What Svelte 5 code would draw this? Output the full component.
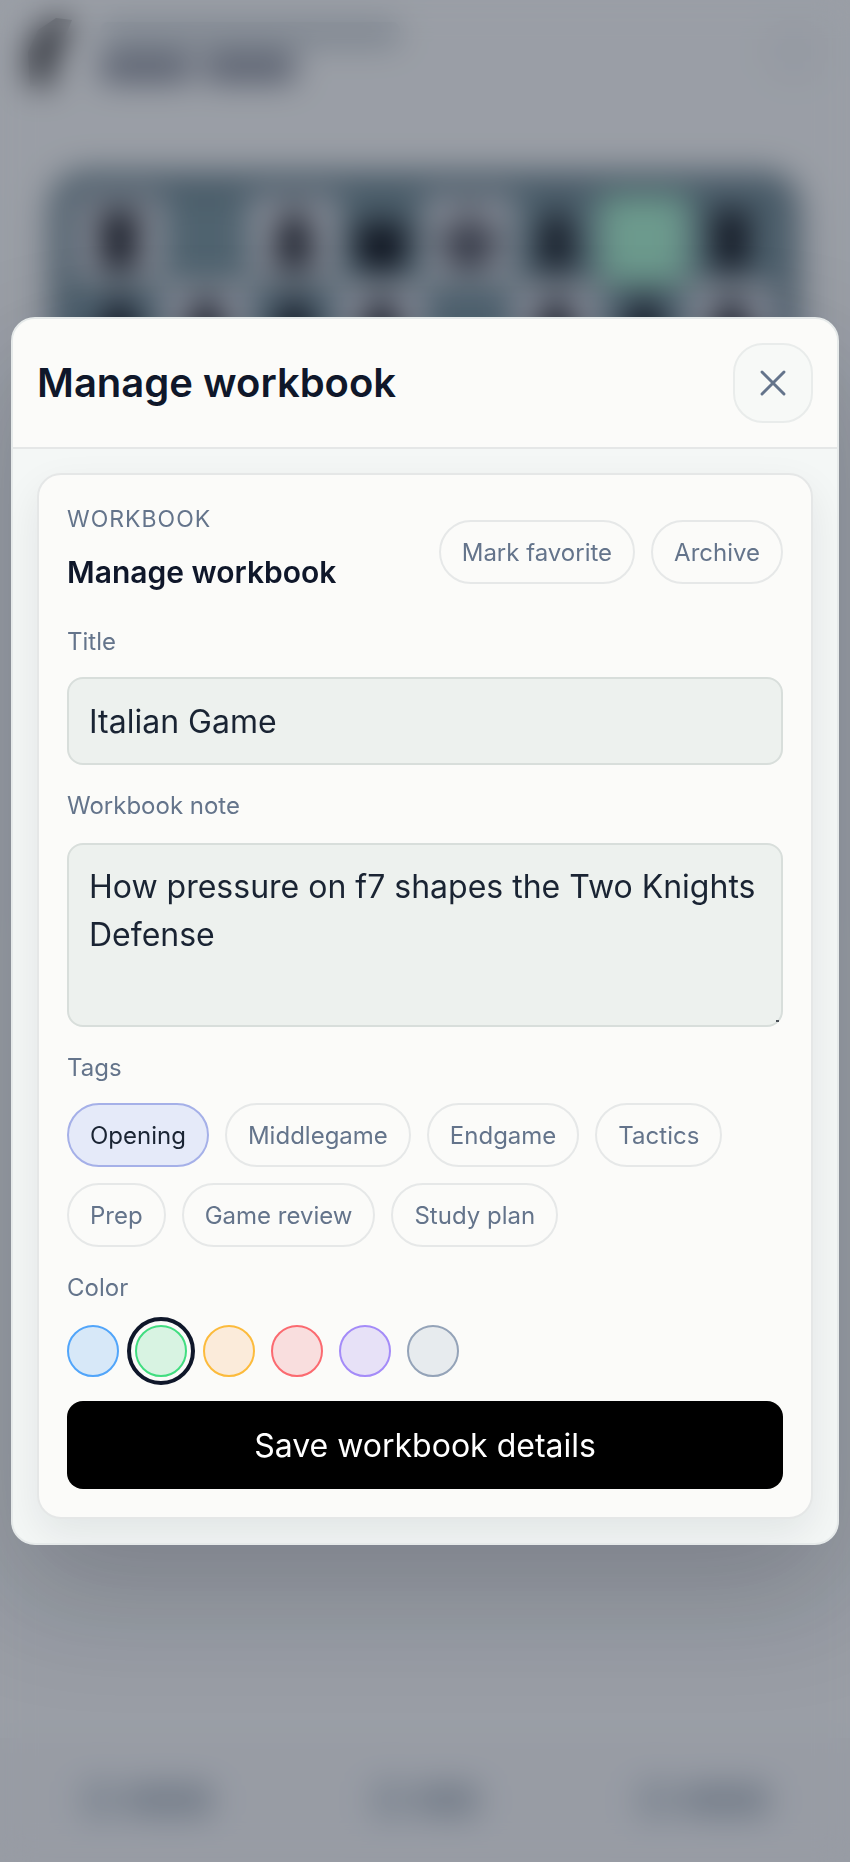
<script lang="ts">
	type Swatch = { name: string; tone: string };

	// piece silhouettes on a 40x40 grid
	const shapes: Record<string, string> = {
		k: 'M18 3h4v5h4v3h-4v5c8-4 14-1 13 4-1 4-4 6-6 9v6H11v-6c-2-3-5-5-6-9-1-5 5-8 13-4v-5h-4V8h4Z',
		q: 'M4 10l6 8 2-12 6 11 2-13 2 13 6-11 2 12 6-8-5 18v7H9v-7Z',
		r: 'M10 5h5v4h3V5h4v4h3V5h5v9l-3 3v10l3 3v5H10v-5l3-3V17l-3-3Z',
		b: 'M20 3c3 0 3 4 1 5 6 4 9 9 7 14l-3 4 1 4c3 1 6 2 7 5H7c1-3 4-4 7-5l1-4-3-4c-2-5 1-10 7-14-2-1-2-5 1-5Z',
		n: 'M12 4l5 4c10 0 16 8 15 27H11c0-9 8-10 8-16l-8 5-5-3 6-10Z',
		p: 'M20 6c6 0 7 6 4 9 5 3 5 7 2 10 4 2 6 5 6 10H8c0-5 2-8 6-10-3-3-3-7 2-10-3-3-2-9 4-9Z'
	};
	const position = 'r1bqkb1r/pppp1ppp/2n2n2/4p3/2B1P3/5N2/PPPP1PPP/RNBQK2R';
	const lastMove = [6, 21];

	const squares = position
		.replaceAll('/', '')
		.replace(/\d/g, (n) => ' '.repeat(Number(n)))
		.split('')
		.map((piece, i) => ({
			shape: shapes[piece.toLowerCase()],
			white: piece !== piece.toLowerCase(),
			king: piece === 'k',
			dark: (Math.floor(i / 8) + i) % 2 === 1,
			moved: lastMove.includes(i)
		}));

	const tags = ['Opening', 'Middlegame', 'Endgame', 'Tactics', 'Prep', 'Game review', 'Study plan'];
	const swatches: Swatch[] = [
		{ name: 'Blue', tone: 'blue' },
		{ name: 'Green', tone: 'green' },
		{ name: 'Amber', tone: 'amber' },
		{ name: 'Red', tone: 'red' },
		{ name: 'Violet', tone: 'violet' },
		{ name: 'Slate', tone: 'slate' }
	];

	let open = $state(true);
	let title = $state('Italian Game');
	let note = $state('How pressure on f7 shapes the Two Knights Defense');
	let selectedTags = $state(['Opening']);
	let color = $state('green');
	let favorite = $state(false);
	let archived = $state(false);

	function toggleTag(tag: string) {
		selectedTags = selectedTags.includes(tag)
			? selectedTags.filter((t) => t !== tag)
			: [...selectedTags, tag];
	}
</script>

<div class="page" aria-hidden="true">
	<div class="topbar">
		<svg class="logo" viewBox="0 0 48 72">
			<path d="M6 70 4 36 14 14 32 2 48 4 40 24 30 40 28 70Z" />
		</svg>
		<div class="heading">
			<span class="bar bar-eyebrow"></span>
			<div class="bar-title">
				<span class="bar"></span>
				<span class="bar"></span>
			</div>
		</div>
		<span class="menu"></span>
	</div>

	<div class="board">
		{#each squares as square}
			<div class="square" class:dark={square.dark} class:moved={square.moved}>
				{#if square.shape}
					<svg class:white={square.white} class:king={square.king} viewBox="0 0 40 40">
						<path d={square.shape} />
					</svg>
				{/if}
			</div>
		{/each}
	</div>

	<div class="tabbar">
		{#each ['wide', 'narrow', 'wide'] as size}
			<div class="tab">
				<span class="tab-icon"></span>
				<span class="tab-label" class:narrow={size === 'narrow'}></span>
			</div>
		{/each}
	</div>
</div>

{#if open}
	<div class="overlay" role="presentation">
		<div class="modal" role="dialog" aria-modal="true" aria-labelledby="modal-title">
			<header class="modal-header">
				<h2 id="modal-title">Manage workbook</h2>
				<button class="close" type="button" aria-label="Close" onclick={() => (open = false)}>
					<svg viewBox="0 0 32 32" aria-hidden="true">
						<path d="M5 5 27 27M27 5 5 27" />
					</svg>
				</button>
			</header>

			<div class="modal-body">
				<form class="card" onsubmit={(e) => e.preventDefault()}>
					<div class="card-head">
						<div class="card-titles">
							<p>Workbook</p>
							<h3>Manage workbook</h3>
						</div>
						<div class="actions">
							<button
								class="chip"
								type="button"
								aria-pressed={favorite}
								onclick={() => (favorite = !favorite)}>Mark favorite</button
							>
							<button
								class="chip"
								type="button"
								aria-pressed={archived}
								onclick={() => (archived = !archived)}>Archive</button
							>
						</div>
					</div>

					<div class="field">
						<label for="workbook-title">Title</label>
						<input id="workbook-title" class="control" type="text" bind:value={title} />
					</div>

					<div class="field field-loose">
						<label for="workbook-note">Workbook note</label>
						<textarea id="workbook-note" class="control" rows="3" bind:value={note}></textarea>
					</div>

					<div class="field" role="group" aria-labelledby="tags-label">
						<span id="tags-label" class="label">Tags</span>
						<div class="chips">
							{#each tags as tag}
								<button
									class="chip"
									class:selected={selectedTags.includes(tag)}
									type="button"
									aria-pressed={selectedTags.includes(tag)}
									onclick={() => toggleTag(tag)}>{tag}</button
								>
							{/each}
						</div>
					</div>

					<div class="field field-loose" role="radiogroup" aria-labelledby="color-label">
						<span id="color-label" class="label">Color</span>
						<div class="swatches">
							{#each swatches as swatch}
								<input
									class="swatch {swatch.tone}"
									type="radio"
									name="color"
									value={swatch.tone}
									aria-label={swatch.name}
									bind:group={color}
								/>
							{/each}
						</div>
					</div>

					<button class="save" type="submit">Save workbook details</button>
				</form>
			</div>
		</div>
	</div>
{/if}

<style>
	:global(body) {
		background: #f7f9f8;
		font-family: Inter, 'Liberation Sans', sans-serif;
		color: #1a2433;
	}

	.page {
		display: flex;
		flex-direction: column;
		min-height: 100vh;
	}

	.topbar {
		display: flex;
		align-items: center;
		gap: 28px;
		height: 104px;
		padding: 0 24px;
	}

	.logo {
		width: 48px;
		height: 72px;
		fill: #3a3a3a;
	}

	.heading {
		flex: 1;
		display: grid;
		gap: 8px;
	}

	.bar {
		height: 24px;
		border-radius: 8px;
	}

	.bar-eyebrow {
		width: 300px;
		background: #c3cbcf;
	}

	.bar-title {
		display: flex;
		gap: 12px;
	}

	.bar-title .bar {
		width: 92px;
		height: 28px;
		background: #858b97;
	}

	.menu {
		width: 64px;
		height: 64px;
		border-radius: 24px;
		background: #f0f3f4;
	}

	.board {
		display: grid;
		grid-template-columns: repeat(8, 1fr);
		margin: 68px 52px 0;
		padding: 23px;
		border-radius: 32px;
		background: #6a838c;
		box-shadow: 0 16px 40px rgba(15, 23, 42, 0.16);
	}

	.square {
		display: grid;
		place-items: center;
		aspect-ratio: 1;
		background: #dadde2;
	}

	.square.dark {
		background: #7b969d;
	}

	.square.moved {
		background: #abf2cf;
	}

	.square svg {
		width: 92%;
		fill: #0a0c12;
	}

	.square svg.white {
		fill: #fbfbf9;
	}

	.square svg.king {
		fill: #4a4c55;
	}

	.tabbar {
		display: grid;
		grid-template-columns: repeat(3, 1fr);
		align-items: center;
		height: 124px;
		margin-top: auto;
		padding: 0 8px;
		background: #f3f5f6;
	}

	.tab {
		display: flex;
		justify-content: center;
		align-items: center;
		gap: 8px;
	}

	.tab-icon {
		width: 36px;
		height: 40px;
		border-radius: 8px;
		background: #cdd5da;
	}

	.tab-label {
		width: 88px;
		height: 34px;
		border-radius: 8px;
		background: #bbc4cb;
	}

	.tab-label.narrow {
		width: 64px;
	}

	.overlay {
		position: fixed;
		inset: 0;
		display: grid;
		grid-template-columns: minmax(0, 1fr);
		align-items: center;
		padding: 11px;
		background: rgba(15, 23, 42, 0.4);
		backdrop-filter: blur(16px);
	}

	.modal {
		overflow: hidden;
		border: 2px solid #e6eaea;
		border-radius: 24px;
		background: #f4f7f6;
		box-shadow: 0 48px 120px rgba(15, 23, 42, 0.22);
	}

	.modal-header {
		display: flex;
		justify-content: space-between;
		align-items: center;
		padding: 24px;
		border-bottom: 2px solid #e5e7e7;
		background: #fbfbf9;
	}

	h2,
	h3,
	p {
		margin: 0;
	}

	h2 {
		font-size: 40px;
		line-height: 48px;
		font-weight: 600;
		color: #0f172a;
	}

	button,
	input,
	textarea {
		box-sizing: border-box;
		margin: 0;
		font: inherit;
	}

	button {
		cursor: pointer;
	}

	.close {
		display: grid;
		place-items: center;
		width: 80px;
		height: 80px;
		padding: 0;
		border: 2px solid #e9eceb;
		border-radius: 30px;
		background: #f7f9f7;
	}

	.close svg {
		width: 32px;
		height: 32px;
		fill: none;
		stroke: #64748b;
		stroke-width: 3;
		stroke-linecap: round;
	}

	.modal-body {
		padding: 24px;
	}

	.card {
		display: grid;
		gap: 24px;
		padding: 28px;
		border: 2px solid #e5e7e7;
		border-radius: 24px;
		background: #fbfbf9;
		box-shadow: 0 16px 40px rgba(15, 23, 42, 0.08);
	}

	.card-head {
		display: flex;
		justify-content: space-between;
		align-items: center;
		gap: 24px;
	}

	.card-titles p {
		font-size: 23px;
		line-height: 32px;
		letter-spacing: 1px;
		text-transform: uppercase;
		color: #64748b;
	}

	h3 {
		margin: 16px 0 8px;
		font-size: 30px;
		line-height: 42px;
		font-weight: 600;
		color: #0f172a;
	}

	.actions,
	.chips,
	.swatches {
		display: flex;
		flex-wrap: wrap;
		gap: 16px;
	}

	.chip {
		height: 64px;
		padding: 0 21px;
		border: 2px solid #e6e8e8;
		border-radius: 32px;
		background: transparent;
		font-size: 24px;
		color: #64748b;
	}

	.chip.selected {
		border-color: #a5b0e8;
		background: #e5eaf9;
		color: #1a2433;
	}

	.field {
		display: grid;
		gap: 18px;
	}

	.field-loose {
		gap: 20px;
	}

	label,
	.label {
		font-size: 24px;
		line-height: 34px;
		color: #64748b;
	}

	.control {
		display: block;
		width: 100%;
		padding: 18px 20px;
		border: 2px solid #d8dedb;
		border-radius: 16px;
		background: #edf1ee;
		font-size: 32px;
		line-height: 48px;
		color: #1a2433;
	}

	input.control {
		height: 88px;
	}

	textarea {
		resize: vertical;
	}

	textarea::-webkit-resizer {
		background: linear-gradient(#4b5158, #4b5158) 10px 10px / 3px 2px no-repeat;
	}

	.swatch {
		appearance: none;
		width: 52px;
		height: 52px;
		border: 2px solid;
		border-radius: 50%;
		cursor: pointer;
	}

	.swatch:checked {
		outline: 4px solid #0f172a;
		outline-offset: 4px;
	}

	.blue {
		border-color: #51a5fa;
		background: #d7e8f8;
	}

	.green {
		border-color: #41dd80;
		background: #d8f3e2;
	}

	.amber {
		border-color: #fcbb3c;
		background: #fbebda;
	}

	.red {
		border-color: #fb6a70;
		background: #f9dede;
	}

	.violet {
		border-color: #a48bf8;
		background: #e7e1f7;
	}

	.slate {
		border-color: #94a3b8;
		background: #e7ebee;
	}

	.save {
		height: 88px;
		padding: 0 20px;
		border: 0;
		border-radius: 16px;
		background: #000;
		font-size: 32px;
		color: #fff;
	}
</style>
